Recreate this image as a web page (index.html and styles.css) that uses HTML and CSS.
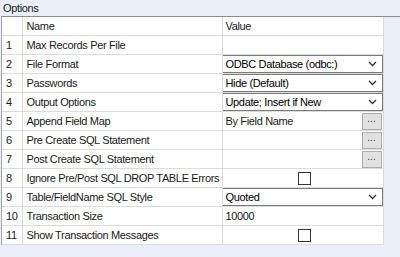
FILE: index.html
```html
<!DOCTYPE html>
<html lang="en">
<head>
  <meta charset="UTF-8">
  <title>Options</title>
  <link rel="stylesheet" href="styles.css">
</head>
<body>
  <div class="caption">Options</div>
  <div class="panel">
    <table class="grid">
      <tr class="head"><td class="num"></td><td class="name">Name</td><td class="value">Value</td></tr>
      <tr><td class="num">1</td><td class="name">Max Records Per File</td><td class="value"></td></tr>
      <tr><td class="num">2</td><td class="name">File Format</td><td class="value"><div class="select"><span>ODBC Database (odbc:)</span><svg class="chev" width="9" height="6" viewBox="0 0 9 6"><path d="M1 1l3.5 3.5L8 1" fill="none" stroke="#333" stroke-width="1.3"/></svg></div></td></tr>
      <tr><td class="num">3</td><td class="name">Passwords</td><td class="value"><div class="select"><span>Hide (Default)</span><svg class="chev" width="9" height="6" viewBox="0 0 9 6"><path d="M1 1l3.5 3.5L8 1" fill="none" stroke="#333" stroke-width="1.3"/></svg></div></td></tr>
      <tr><td class="num">4</td><td class="name">Output Options</td><td class="value"><div class="select"><span>Update; Insert if New</span><svg class="chev" width="9" height="6" viewBox="0 0 9 6"><path d="M1 1l3.5 3.5L8 1" fill="none" stroke="#333" stroke-width="1.3"/></svg></div></td></tr>
      <tr><td class="num">5</td><td class="name">Append Field Map</td><td class="value"><div class="browse"><span>By Field Name</span><button class="dots">...</button></div></td></tr>
      <tr><td class="num">6</td><td class="name">Pre Create SQL Statement</td><td class="value"><div class="browse"><span></span><button class="dots">...</button></div></td></tr>
      <tr><td class="num">7</td><td class="name">Post Create SQL Statement</td><td class="value"><div class="browse"><span></span><button class="dots">...</button></div></td></tr>
      <tr><td class="num">8</td><td class="name">Ignore Pre/Post SQL DROP TABLE Errors</td><td class="value"><div class="check"><span class="box"></span></div></td></tr>
      <tr><td class="num">9</td><td class="name">Table/FieldName SQL Style</td><td class="value"><div class="select"><span>Quoted</span><svg class="chev" width="9" height="6" viewBox="0 0 9 6"><path d="M1 1l3.5 3.5L8 1" fill="none" stroke="#333" stroke-width="1.3"/></svg></div></td></tr>
      <tr><td class="num">10</td><td class="name">Transaction Size</td><td class="value">10000</td></tr>
      <tr><td class="num">11</td><td class="name">Show Transaction Messages</td><td class="value"><div class="check"><span class="box"></span></div></td></tr>
    </table>
  </div>
</body>
</html>
```

FILE: styles.css
```css
body {
  margin: 0;
  background: #e9eef8;
  font-family: "Liberation Sans", Arial, sans-serif;
  font-size: 11px;
  letter-spacing: -0.35px;
  color: #1a1a1a;
}
.caption {
  height: 16px;
  padding: 2px 0 0 3px;
  box-sizing: border-box;
  line-height: 13px;
}
.panel {
  border-top: 1px solid #8c8c8c;
  border-left: 1px solid #a8a8a8;
  margin-left: 1px;
  height: 229px;
  box-sizing: border-box;
}
.grid {
  border-collapse: collapse;
  background: #fff;
  table-layout: fixed;
  width: 381px;
}
.grid td {
  height: 18px;
  padding: 0 0 0 4px;
  border-right: 1px solid #dcdcdc;
  border-bottom: 1px solid #dcdcdc;
  white-space: nowrap;
  overflow: hidden;
  box-sizing: border-box;
  line-height: 18px;
}
.grid td.num { width: 20px; padding-left: 4px; }
.grid td.name { width: 200px; }
.grid td.value { width: 161px; padding-left: 3px; overflow: visible; }

.select {
  display: flex;
  align-items: center;
  justify-content: space-between;
  margin: 0 0 0 -4px;
  height: 18px;
  padding: 0 5px 0 3px;
  border: 1px solid #7a7a7a;
  box-sizing: border-box;
  background: #fff;
  color: #000;
}
.chev { flex: none; }

.browse {
  display: flex;
  align-items: center;
  justify-content: space-between;
  height: 18px;
}
.dots {
  width: 20px;
  height: 17px;
  margin-right: 1px;
  padding: 0 0 4px;
  border: 1px solid #adadad;
  background: #e1e1e1;
  font-family: "Liberation Sans", Arial, sans-serif;
  font-size: 10px;
  line-height: 10px;
  color: #444;
}

.check {
  display: flex;
  justify-content: center;
  align-items: center;
  height: 18px;
}
.box {
  width: 13px;
  height: 13px;
  border: 1px solid #333;
  box-sizing: border-box;
  background: #fff;
}
```
